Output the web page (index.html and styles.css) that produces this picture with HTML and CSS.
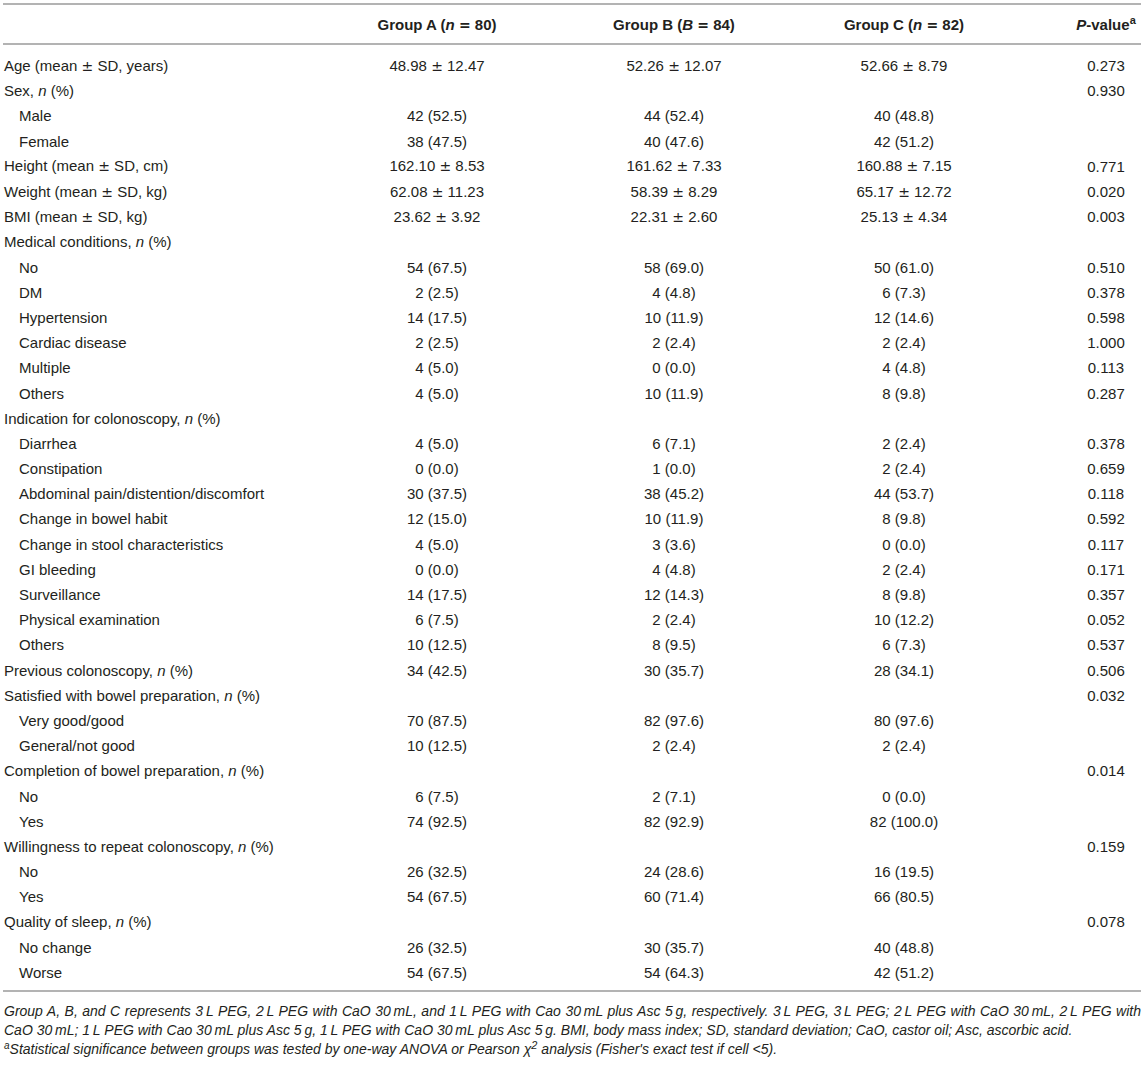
FILE: index.html
```html
<!DOCTYPE html>
<html>
<head>
<meta charset="utf-8">
<link rel="stylesheet" href="styles.css">
</head>
<body>
<div class="wrap">
<table class="tbl">
<colgroup>
<col class="c1"><col class="c2"><col class="c3"><col class="c4"><col class="c5">
</colgroup>
<thead>
<tr><th></th><th>Group A (<i>n</i> <span class="op">=</span> 80)</th><th>Group B (<i>B</i> <span class="op">=</span> 84)</th><th>Group C (<i>n</i> <span class="op">=</span> 82)</th><th><i>P</i>-value<sup>a</sup></th></tr>
</thead>
<tbody>
<tr class="first"><td>Age (mean <span class="op">±</span> SD, years)</td><td>48.98 <span class="op">±</span> 12.47</td><td>52.26 <span class="op">±</span> 12.07</td><td>52.66 <span class="op">±</span> 8.79</td><td>0.273</td></tr>
<tr><td>Sex, <i>n</i> (%)</td><td></td><td></td><td></td><td>0.930</td></tr>
<tr><td class="sub">Male</td><td>42 (52.5)</td><td>44 (52.4)</td><td>40 (48.8)</td><td></td></tr>
<tr><td class="sub">Female</td><td>38 (47.5)</td><td>40 (47.6)</td><td>42 (51.2)</td><td></td></tr>
<tr><td>Height (mean <span class="op">±</span> SD, cm)</td><td>162.10 <span class="op">±</span> 8.53</td><td>161.62 <span class="op">±</span> 7.33</td><td>160.88 <span class="op">±</span> 7.15</td><td>0.771</td></tr>
<tr><td>Weight (mean <span class="op">±</span> SD, kg)</td><td>62.08 <span class="op">±</span> 11.23</td><td>58.39 <span class="op">±</span> 8.29</td><td>65.17 <span class="op">±</span> 12.72</td><td>0.020</td></tr>
<tr><td>BMI (mean <span class="op">±</span> SD, kg)</td><td>23.62 <span class="op">±</span> 3.92</td><td>22.31 <span class="op">±</span> 2.60</td><td>25.13 <span class="op">±</span> 4.34</td><td>0.003</td></tr>
<tr><td>Medical conditions, <i>n</i> (%)</td><td></td><td></td><td></td><td></td></tr>
<tr><td class="sub">No</td><td>54 (67.5)</td><td>58 (69.0)</td><td>50 (61.0)</td><td>0.510</td></tr>
<tr><td class="sub">DM</td><td>2 (2.5)</td><td>4 (4.8)</td><td>6 (7.3)</td><td>0.378</td></tr>
<tr><td class="sub">Hypertension</td><td>14 (17.5)</td><td>10 (11.9)</td><td>12 (14.6)</td><td>0.598</td></tr>
<tr><td class="sub">Cardiac disease</td><td>2 (2.5)</td><td>2 (2.4)</td><td>2 (2.4)</td><td>1.000</td></tr>
<tr><td class="sub">Multiple</td><td>4 (5.0)</td><td>0 (0.0)</td><td>4 (4.8)</td><td>0.113</td></tr>
<tr><td class="sub">Others</td><td>4 (5.0)</td><td>10 (11.9)</td><td>8 (9.8)</td><td>0.287</td></tr>
<tr><td>Indication for colonoscopy, <i>n</i> (%)</td><td></td><td></td><td></td><td></td></tr>
<tr><td class="sub">Diarrhea</td><td>4 (5.0)</td><td>6 (7.1)</td><td>2 (2.4)</td><td>0.378</td></tr>
<tr><td class="sub">Constipation</td><td>0 (0.0)</td><td>1 (0.0)</td><td>2 (2.4)</td><td>0.659</td></tr>
<tr><td class="sub">Abdominal pain/distention/discomfort</td><td>30 (37.5)</td><td>38 (45.2)</td><td>44 (53.7)</td><td>0.118</td></tr>
<tr><td class="sub">Change in bowel habit</td><td>12 (15.0)</td><td>10 (11.9)</td><td>8 (9.8)</td><td>0.592</td></tr>
<tr><td class="sub">Change in stool characteristics</td><td>4 (5.0)</td><td>3 (3.6)</td><td>0 (0.0)</td><td>0.117</td></tr>
<tr><td class="sub">GI bleeding</td><td>0 (0.0)</td><td>4 (4.8)</td><td>2 (2.4)</td><td>0.171</td></tr>
<tr><td class="sub">Surveillance</td><td>14 (17.5)</td><td>12 (14.3)</td><td>8 (9.8)</td><td>0.357</td></tr>
<tr><td class="sub">Physical examination</td><td>6 (7.5)</td><td>2 (2.4)</td><td>10 (12.2)</td><td>0.052</td></tr>
<tr><td class="sub">Others</td><td>10 (12.5)</td><td>8 (9.5)</td><td>6 (7.3)</td><td>0.537</td></tr>
<tr><td>Previous colonoscopy, <i>n</i> (%)</td><td>34 (42.5)</td><td>30 (35.7)</td><td>28 (34.1)</td><td>0.506</td></tr>
<tr><td>Satisfied with bowel preparation, <i>n</i> (%)</td><td></td><td></td><td></td><td>0.032</td></tr>
<tr><td class="sub">Very good/good</td><td>70 (87.5)</td><td>82 (97.6)</td><td>80 (97.6)</td><td></td></tr>
<tr><td class="sub">General/not good</td><td>10 (12.5)</td><td>2 (2.4)</td><td>2 (2.4)</td><td></td></tr>
<tr><td>Completion of bowel preparation, <i>n</i> (%)</td><td></td><td></td><td></td><td>0.014</td></tr>
<tr><td class="sub">No</td><td>6 (7.5)</td><td>2 (7.1)</td><td>0 (0.0)</td><td></td></tr>
<tr><td class="sub">Yes</td><td>74 (92.5)</td><td>82 (92.9)</td><td>82 (100.0)</td><td></td></tr>
<tr><td>Willingness to repeat colonoscopy, <i>n</i> (%)</td><td></td><td></td><td></td><td>0.159</td></tr>
<tr><td class="sub">No</td><td>26 (32.5)</td><td>24 (28.6)</td><td>16 (19.5)</td><td></td></tr>
<tr><td class="sub">Yes</td><td>54 (67.5)</td><td>60 (71.4)</td><td>66 (80.5)</td><td></td></tr>
<tr><td>Quality of sleep, <i>n</i> (%)</td><td></td><td></td><td></td><td>0.078</td></tr>
<tr><td class="sub">No change</td><td>26 (32.5)</td><td>30 (35.7)</td><td>40 (48.8)</td><td></td></tr>
<tr class="last"><td class="sub">Worse</td><td>54 (67.5)</td><td>54 (64.3)</td><td>42 (51.2)</td><td></td></tr>
</tbody>
</table>
<div class="notes">
<p>Group A, B, and C represents 3&thinsp;L PEG, 2&thinsp;L PEG with CaO 30&thinsp;mL, and 1&thinsp;L PEG with Cao 30&thinsp;mL plus Asc 5&thinsp;g, respectively. 3&thinsp;L PEG, 3&thinsp;L PEG; 2&thinsp;L PEG with CaO 30&thinsp;mL, 2&thinsp;L PEG with CaO 30&thinsp;mL; 1&thinsp;L PEG with Cao 30&thinsp;mL plus Asc 5&thinsp;g, 1&thinsp;L PEG with CaO 30&thinsp;mL plus Asc 5&thinsp;g. BMI, body mass index; SD, standard deviation; CaO, castor oil; Asc, ascorbic acid.</p>
<p><sup>a</sup>Statistical significance between groups was tested by one-way ANOVA or Pearson χ<sup class="sq">2</sup> analysis (Fisher's exact test if cell &lt;5).</p>
</div>
</div>
</body>
</html>
```

FILE: styles.css
```css
html, body {
  margin: 0;
  padding: 0;
  background: #ffffff;
}
body {
  font-family: "Liberation Sans", Arial, sans-serif;
  color: #231f20;
}
.wrap {
  padding: 3px 4px 0 3px;
}
.tbl {
  width: 1138px;
  border-collapse: collapse;
  table-layout: fixed;
  font-size: 15px;
}
.c1 { width: 260px; }
.c2 { width: 348px; }
.c3 { width: 126px; }
.c4 { width: 334px; }
.c5 { width: 70px; }
.op {
  font-family: "DejaVu Sans", sans-serif;
  font-weight: normal;
  font-size: 14px;
}
.tbl th .op {
  font-weight: bold;
}
.tbl th {
  font-weight: bold;
  text-align: center;
  white-space: nowrap;
  height: 38px;
  padding: 0;
  border-top: 2px solid #b3b3b3;
  border-bottom: 2px solid #b3b3b3;
}
.tbl th sup {
  font-size: 11px;
  line-height: 0;
  vertical-align: 6px;
}
.tbl td {
  height: 25.2px;
  padding: 0;
  text-align: center;
  white-space: nowrap;
  line-height: 17px;
}
.tbl td:first-child {
  text-align: left;
  padding-left: 1px;
}
.tbl td.sub {
  padding-left: 16px;
}
.tbl tr.first td {
  padding-top: 8px;
}
.tbl tr.last td {
  padding-bottom: 5px;
  border-bottom: 2px solid #b3b3b3;
}
.notes {
  margin-top: 10px;
  width: 1138px;
  font-size: 14px;
  font-style: italic;
  line-height: 19px;
  text-align: justify;
}
.notes p {
  margin: 0;
  padding-left: 1px;
}
.notes sup {
  font-size: 10px;
  line-height: 0;
  vertical-align: 5px;
}
.notes sup.sq {
  font-size: 11px;
}
```
